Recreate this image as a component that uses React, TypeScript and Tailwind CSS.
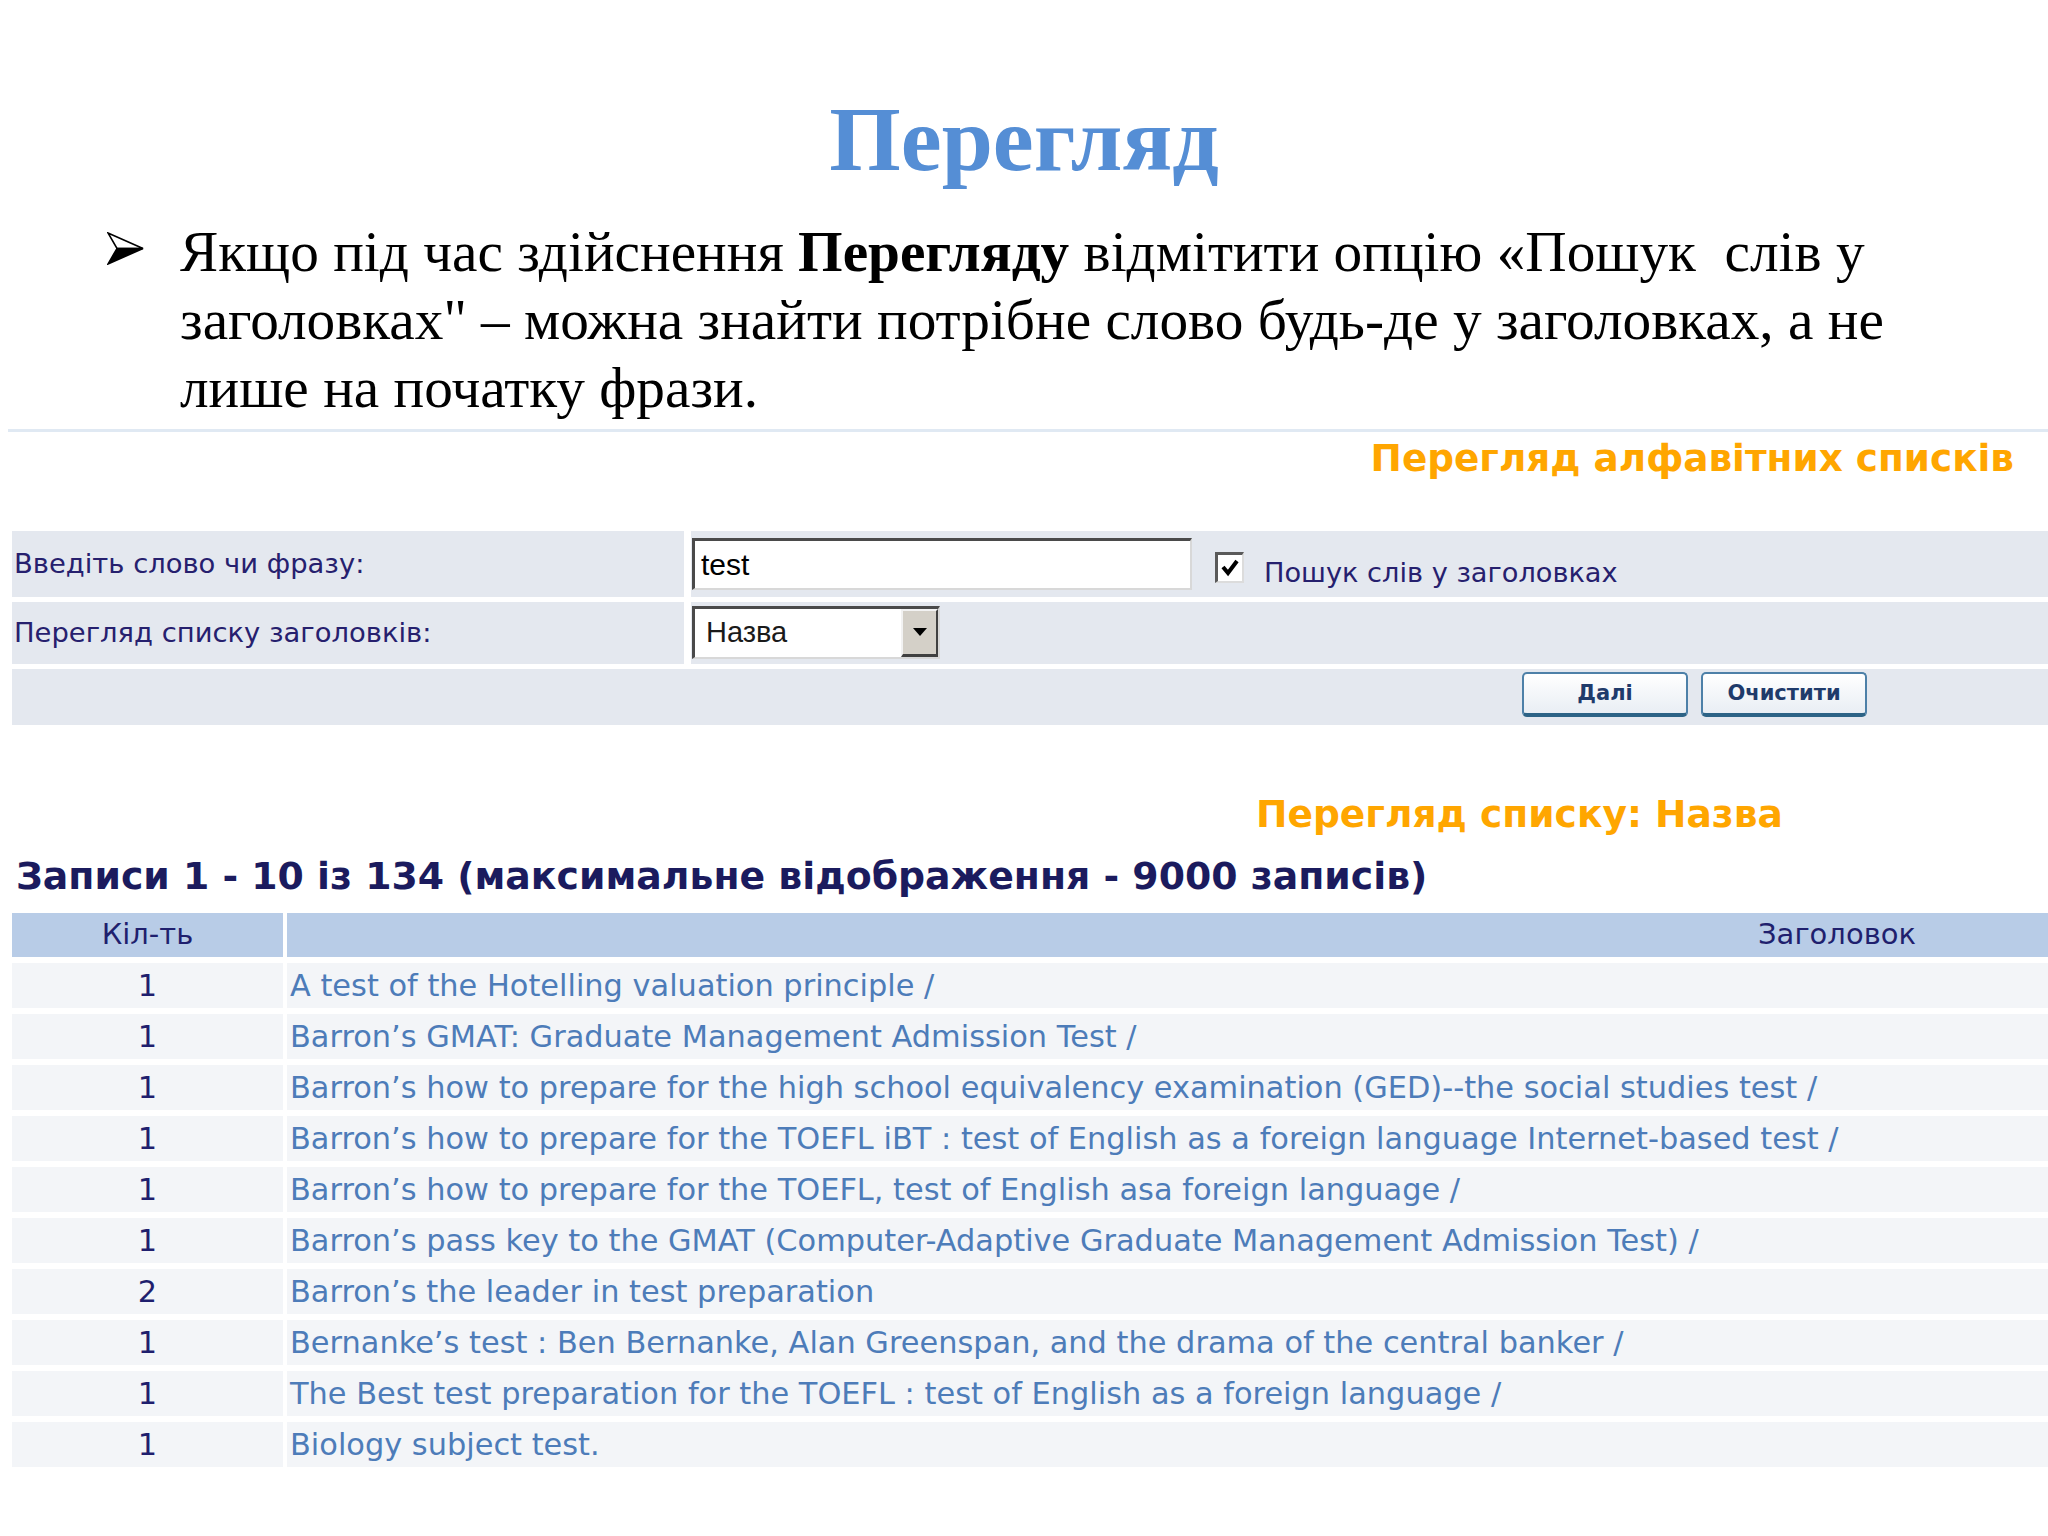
const rows = [
  { n: 1, t: 'A test of the Hotelling valuation principle /' },
  { n: 1, t: 'Barron’s GMAT: Graduate Management Admission Test /' },
  { n: 1, t: 'Barron’s how to prepare for the high school equivalency examination (GED)--the social studies test /' },
  { n: 1, t: 'Barron’s how to prepare for the TOEFL iBT : test of English as a foreign language Internet-based test /' },
  { n: 1, t: 'Barron’s how to prepare for the TOEFL, test of English asa foreign language /' },
  { n: 1, t: 'Barron’s pass key to the GMAT (Computer-Adaptive Graduate Management Admission Test) /' },
  { n: 2, t: 'Barron’s the leader in test preparation' },
  { n: 1, t: 'Bernanke’s test : Ben Bernanke, Alan Greenspan, and the drama of the central banker /' },
  { n: 1, t: 'The Best test preparation for the TOEFL : test of English as a foreign language /' },
  { n: 1, t: 'Biology subject test.' },
]

function Bullet() {
  return (
    <svg width="37" height="33" viewBox="0 0 37 33">
      <polygon points="1,1 36,16.5 10,16.5" fill="#fff" stroke="#000" strokeWidth="1.6" strokeLinejoin="miter" />
      <polygon points="10,16.5 36,16.5 1,32" fill="#000" stroke="#000" strokeWidth="1.6" />
    </svg>
  )
}

function Checkbox() {
  return (
    <div className="w-[29px] h-[31px] bg-white border-t-[3px] border-l-[3px] border-r-2 border-b-2 border-t-[#5a5a5a] border-l-[#5a5a5a] border-r-[#dcdcdc] border-b-[#dcdcdc] flex items-center justify-center">
      <svg width="20" height="20" viewBox="0 0 20 20">
        <path d="M3 9 L8 15 L17 3" fill="none" stroke="#000" strokeWidth="4" strokeLinejoin="miter" />
      </svg>
    </div>
  )
}

function Select() {
  return (
    <div className="w-[248px] h-[53px] bg-white flex border-t-[3px] border-l-[3px] border-r-2 border-b-2 border-t-[#4a4a4a] border-l-[#4a4a4a] border-r-[#d8d8d8] border-b-[#d8d8d8]">
      <div className="flex-1 flex items-center pl-[11px] text-[29px] text-[#1a1a1a] font-['Liberation_Sans',sans-serif]">
        Назва
      </div>
      <div className="w-[37px] bg-[#d4d0c8] border-t-2 border-l-2 border-t-[#f2f2f2] border-l-[#f2f2f2] border-r-2 border-b-[3px] border-r-[#404040] border-b-[#404040] flex items-center justify-center">
        <svg width="14" height="9" viewBox="0 0 14 9">
          <polygon points="0,0 14,0 7,8" fill="#000" />
        </svg>
      </div>
    </div>
  )
}

function Btn({ label }: { label: string }) {
  return (
    <div className="w-[166px] h-[45px] rounded-[5px] border-2 border-b-[4px] border-[#4d80a8] border-b-[#2d6386] bg-gradient-to-b from-white to-[#e9eef4] flex items-center justify-center text-[21px] font-bold text-[#1f3b6b] font-['DejaVu_Sans',sans-serif]">
      {label}
    </div>
  )
}

export default function App() {
  return (
    <div className="w-[2048px] h-[1536px] bg-white overflow-hidden font-['DejaVu_Sans',sans-serif]">
      <h1 className="pt-[89px] h-[189px] text-center text-[92px] leading-[100px] font-bold text-[#558ed5] font-['Liberation_Serif',serif]">
        Перегляд
      </h1>

      <div className="mt-[29px] flex pl-[107px]">
        <div className="mt-[14px] w-[37px] shrink-0">
          <Bullet />
        </div>
        <p className="ml-[36px] text-[57.3px] leading-[68px] text-black font-['Liberation_Serif',serif] whitespace-pre">
          Якщо під час здійснення <b>Перегляду</b> відмітити опцію «Пошук  слів у
          <br />
          заголовках" – можна знайти потрібне слово будь-де у заголовках, а не
          <br />
          лише на початку фрази.
        </p>
      </div>

      <div className="mt-[7px] ml-[8px] h-[3px] bg-[#e0e9f3]" />

      <div className="mt-[4px] h-[44px] text-right pr-[34px] text-[37.4px] leading-[44px] font-bold text-[#ffa600]">
        Перегляд алфавітних списків
      </div>

      <div className="mt-[51px] flex flex-col gap-[5px]">
        <div className="flex h-[66px] gap-[7px]">
          <div className="ml-[12px] w-[672px] bg-[#e4e8ef] flex items-center pl-[2px] text-[27.4px] text-[#26206e]">
            Введіть слово чи фразу:
          </div>
          <div className="flex-1 bg-[#e4e8ef] flex items-start pl-[1px]">
            <div className="mt-[7px] w-[500px] h-[52px] bg-white flex items-center pl-[6px] text-[30px] text-black font-['Liberation_Sans',sans-serif] border-t-[3px] border-l-[3px] border-r-2 border-b-2 border-t-[#4a4a4a] border-l-[#4a4a4a] border-r-[#d8d8d8] border-b-[#d8d8d8]">
              test
            </div>
            <div className="mt-[21px] ml-[23px]">
              <Checkbox />
            </div>
            <div className="mt-[27px] ml-[20px] text-[27.2px] leading-[30px] text-[#26206e]">
              Пошук слів у заголовках
            </div>
          </div>
        </div>

        <div className="flex h-[62px] gap-[7px]">
          <div className="ml-[12px] w-[672px] bg-[#e4e8ef] flex items-center pl-[2px] text-[27.4px] text-[#26206e]">
            Перегляд списку заголовків:
          </div>
          <div className="flex-1 bg-[#e4e8ef] flex items-start pl-[1px] pt-[4px]">
            <Select />
          </div>
        </div>

        <div className="ml-[12px] h-[56px] bg-[#e4e8ef] flex justify-end items-start pt-[3px] pr-[181px] gap-[13px]">
          <Btn label="Далі" />
          <Btn label="Очистити" />
        </div>
      </div>

      <div className="mt-[67px] h-[44px] pl-[1256px] text-[37.6px] leading-[44px] font-bold text-[#ffa600] whitespace-nowrap">
        Перегляд списку: Назва
      </div>

      <div className="mt-[18px] h-[44px] pl-[16px] text-[37.8px] leading-[44px] font-bold text-[#1b1b5e] whitespace-nowrap">
        Записи 1 - 10 із 134 (максимальне відображення - 9000 записів)
      </div>

      <div className="mt-[15px] flex flex-col gap-[6px]">
        <div className="flex h-[44px] gap-[4px] text-[29px] text-[#1f1f6e]">
          <div className="ml-[12px] w-[271px] bg-[#b8cce7] flex items-center justify-center">Кіл-ть</div>
          <div className="flex-1 bg-[#b8cce7] flex items-center justify-end pr-[132px]">Заголовок</div>
        </div>
        {rows.map((r, i) => (
          <div key={i} className="flex h-[45px] gap-[4px] text-[30.4px]">
            <div className="ml-[12px] w-[271px] bg-[#f3f5f8] flex items-center justify-center text-[#1f1f6e]">
              {r.n}
            </div>
            <div className="flex-1 bg-[#f3f5f8] flex items-center pl-[3px] text-[#4d7cb9] whitespace-nowrap overflow-hidden">
              {r.t}
            </div>
          </div>
        ))}
      </div>
    </div>
  )
}
